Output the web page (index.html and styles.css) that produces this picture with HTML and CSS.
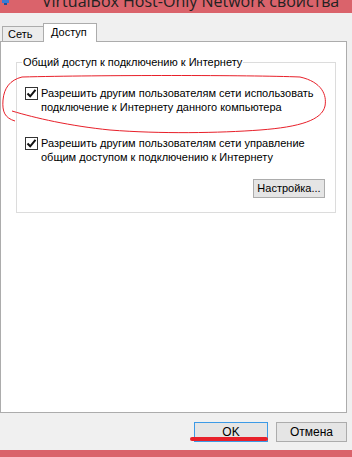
FILE: index.html
```html
<!DOCTYPE html>
<html>
<head>
<meta charset="utf-8">
<link rel="stylesheet" href="styles.css">
</head>
<body>
<div class="window">
  <div class="titlebar">
    <svg class="appicon" width="9" height="6" viewBox="0 0 9 6"><rect x="1" y="0" width="7" height="3" fill="#3a7bd5"/><rect x="3" y="3" width="3" height="2" fill="#1e4f9a"/></svg>
    <span class="title">VirtualBox Host-Only Network свойства</span>
  </div>
  <div class="tabs">
    <div class="tab">Сеть</div>
    <div class="tab active">Доступ</div>
  </div>
  <div class="panel">
    <div class="group">
      <span class="legend">Общий доступ к подключению к Интернету</span>
      <div class="check first">
        <span class="box"><svg width="11" height="11" viewBox="0 0 11 11"><path d="M1.5 5.5 L4.2 8.3 L9.5 1.8" fill="none" stroke="#111" stroke-width="2"/></svg></span>
        <span class="label">Разрешить другим пользователям сети использовать<br>подключение к Интернету данного компьютера</span>
      </div>
      <div class="check second">
        <span class="box"><svg width="11" height="11" viewBox="0 0 11 11"><path d="M1.5 5.5 L4.2 8.3 L9.5 1.8" fill="none" stroke="#111" stroke-width="2"/></svg></span>
        <span class="label">Разрешить другим пользователям сети управление<br>общим доступом к подключению к Интернету</span>
      </div>
      <div class="settings-row"><button class="btn settings">Настройка...</button></div>
    </div>
    <svg class="loop" width="340" height="70" viewBox="0 70 340 70"><path d="M15,121 C5,118 2,112 3,100 C4,88 10,80 22,77 C100,75 250,75 300,77 C322,82 327,95 325,106 C322,120 300,127 260,130 C220,133 160,134 110,130 C70,126 35,118 12,111" fill="none" stroke="#e8202a" stroke-width="1"/></svg>
  </div>
  <div class="footer">
    <button class="btn ok">OK</button>
    <button class="btn cancel">Отмена</button>
    <span class="underline"></span>
  </div>
  <div class="bottombar"></div>
</div>
</body>
</html>
```
FILE: styles.css
```css
html, body {
  margin: 0;
  padding: 0;
}
body {
  width: 352px;
  height: 457px;
  overflow: hidden;
  background: #f0f0f0;
  font-family: "Liberation Sans", Arial, sans-serif;
  font-size: 11px;
  color: #000;
}
.window {
  display: flex;
  flex-direction: column;
  height: 457px;
}
.titlebar {
  height: 13px;
  background: #da636b;
  display: flex;
  align-items: flex-end;
  overflow: hidden;
}
.appicon {
  margin-left: 1px;
  align-self: flex-start;
}
.title {
  font-size: 16px;
  line-height: 20px;
  color: #222;
  margin-left: 32px;
  margin-bottom: 2px;
  white-space: nowrap;
  font-family: "Open Sans", "Liberation Sans", sans-serif;
}
.tabs {
  display: flex;
  align-items: flex-end;
  padding-left: 2px;
  height: 28px;
}
.tab {
  height: 14px;
  line-height: 15px;
  padding: 0 5px;
  border: 1px solid #acacac;
  border-bottom: none;
  background: #ececec;
  width: 30px;
}
.tab.active {
  height: 18px;
  line-height: 17px;
  width: 39px;
  background: #fff;
  margin-left: -1px;
  margin-bottom: -1px;
  position: relative;
  z-index: 1;
  padding: 0 6px 0 7px;
}
.panel {
  width: 345px;
  height: 370px;
  background: #fff;
  border: 1px solid #acacac;
  position: relative;
}
.group {
  margin: 20px 0 0 15px;
  width: 320px;
  height: 151px;
  border: 1px solid #dcdcdc;
  box-sizing: border-box;
  display: flex;
  flex-direction: column;
}
.legend {
  align-self: flex-start;
  margin: -8px 0 0 5px;
  padding: 0 1px;
  background: #fff;
  line-height: 14px;
  white-space: nowrap;
}
.check {
  display: flex;
  align-items: flex-start;
  margin-left: 8px;
}
.check.first {
  margin-top: 17px;
}
.check.second {
  margin-top: 22px;
}
.box {
  width: 11px;
  height: 11px;
  border: 1px solid #333;
  background: #fff;
  display: flex;
  margin-top: 1px;
  flex: none;
}
.label {
  margin-left: 3px;
  line-height: 14px;
  white-space: nowrap;
}
.settings-row {
  display: flex;
  justify-content: flex-end;
  margin-top: 15px;
  padding-right: 10px;
}
.btn {
  font-family: "Liberation Sans", Arial, sans-serif;
  font-size: 11px;
  background: #e5e5e5;
  border: 1px solid #acacac;
  padding: 0;
  color: #000;
  height: 19px;
  line-height: 17px;
}
.settings {
  width: 72px;
}
.loop {
  position: absolute;
  left: -1px;
  top: 28px;
  pointer-events: none;
}
.footer {
  height: 37px;
  display: flex;
  align-items: flex-start;
  padding-top: 9px;
  box-sizing: border-box;
  position: relative;
}
.ok {
  margin-left: 194px;
  width: 74px;
  height: 20px;
  border-color: #3c9ae6;
  font-size: 12px;
}
.cancel {
  margin-left: 8px;
  width: 71px;
  height: 20px;
  font-size: 12px;
}
.underline {
  position: absolute;
  left: 190px;
  top: 24px;
  width: 78px;
  height: 4px;
  background: #e8202a;
  border-radius: 2px;
}
.bottombar {
  flex: 1;
  background: #da636b;
}
```
